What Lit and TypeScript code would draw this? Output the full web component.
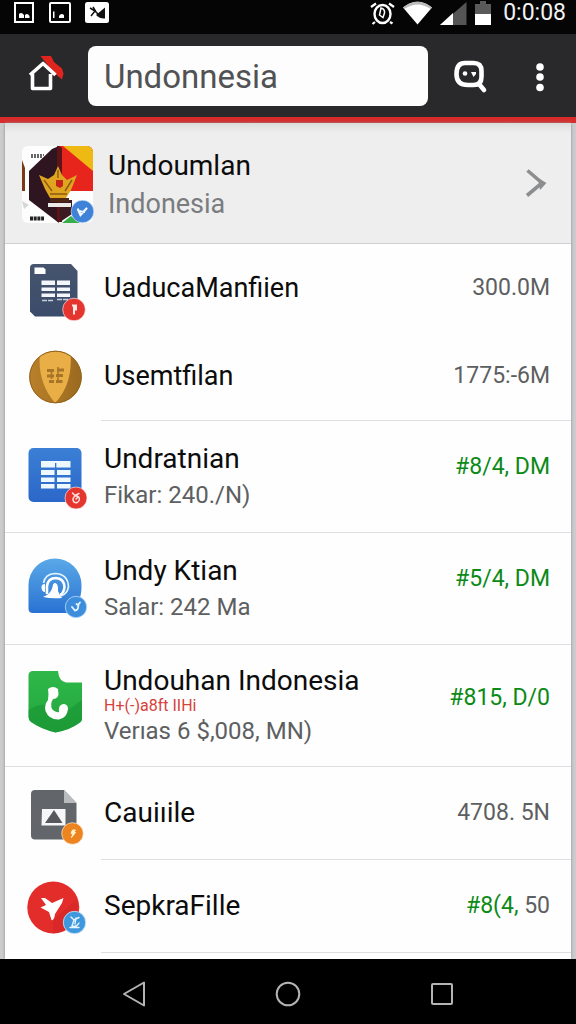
import { LitElement, html, css, svg, nothing, TemplateResult } from "lit";
import { customElement, property } from "lit/decorators.js";
import { classMap } from "lit/directives/class-map.js";

type Line = "none" | "inset" | "full";

interface Entry {
  icon: string;
  title: string;
  note?: string;
  sub?: string;
  value: string;
  tail?: string;
  green?: boolean;
  size: "short" | "medium" | "tall" | "triple";
  line: Line;
}

const entries: Entry[] = [
  { icon: "sheet", title: "UaducaManfiien", value: "300.0M", size: "short", line: "none" },
  { icon: "coin", title: "Usemtfilan", value: "1775:-6M", size: "short", line: "inset" },
  { icon: "table", title: "Undratnian", sub: "Fikar: 240./N)", value: "#8/4, DM", green: true, size: "tall", line: "full" },
  { icon: "support", title: "Undy Ktian", sub: "Salar: 242 Ma", value: "#5/4, DM", green: true, size: "tall", line: "full" },
  { icon: "phone", title: "Undouhan Indonesia", note: "H+(-)a8ft IIHi", sub: "Verıas 6 $,008, MN)", value: "#815, D/0", green: true, size: "triple", line: "full" },
  { icon: "picture", title: "Cauiıile", value: "4708. 5N", size: "medium", line: "inset" },
  { icon: "plane", title: "SepkraFille", value: "#8(4,", tail: " 50", green: true, size: "medium", line: "inset" },
];

const icons: Record<string, { box: string; art: TemplateResult }> = {
  sheet: {
    box: "21 252 72 72",
    art: svg`
      <defs><linearGradient id="a" x1="0" y1="0" x2="0" y2="1"><stop offset="0" stop-color="#46546d"/><stop offset="1" stop-color="#3b4c6b"/></linearGradient></defs>
      <path d="M34 264H71L77.500 271V312Q77.500 316.500 73 316.500H35L30 311.500V268Q30 264 34 264Z" fill="url(#a)"/>
      <path d="M34.500 267.500H43.500L45.500 269.500V274H34.500Z" fill="#fff"/>
      <path d="M41.500 280.500H55V285H41.500ZM57 280.500H70V285H57ZM41.500 287.500H55V291H41.500ZM57 287.500H70V291H57ZM41.500 293.500H55V297H41.500ZM57 293.500H70V297H57Z" fill="#f3f6fb"/>
      <path d="M42 300.500H54M57 299.500H69" stroke="#c6cedd" stroke-width="1.700" stroke-dasharray="5 1"/>
      <circle cx="74" cy="309.500" r="11.300" fill="#e5352f" stroke="#fff" stroke-width=".6"/>
      <path d="M72 305.500H76V309.500H73M74 305.500V314.500" fill="none" stroke="#ffe9e6" stroke-width="2"/>`,
  },
  coin: {
    box: "21 341 72 72",
    art: svg`
      <defs><linearGradient id="b"><stop offset="0" stop-color="#b9802a"/><stop offset="1" stop-color="#9b6a20"/></linearGradient>
      <clipPath id="bc"><circle cx="55.500" cy="377" r="25.800"/></clipPath></defs>
      <circle cx="55.500" cy="377" r="26.200" fill="url(#b)"/>
      <path clip-path="url(#bc)" d="M40 353Q55 347 70.500 353Q73 384 55 403Q37 382 40 353Z" fill="#eaae46"/>
      <circle cx="55.500" cy="377" r="25.800" fill="none" stroke="#94641c" stroke-width="1"/>
      <path d="M47 370.500H54M57 370H64M47 376H54M56 375.500H63M49 381.500H54M56 381.500H62.500" stroke="#a87428" stroke-width="3"/>
      <path d="M58 367V383M51.500 372V379" stroke="#a87428" stroke-width="1.500"/>`,
  },
  table: {
    box: "21 441 72 72",
    art: svg`
      <defs><linearGradient id="c" x1="0" y1="0" x2="0" y2="1"><stop offset="0" stop-color="#3b7fd6"/><stop offset="1" stop-color="#2b67c8"/></linearGradient></defs>
      <rect x="28.500" y="448" width="53" height="54" rx="5" fill="url(#c)"/>
      <path d="M41 461H70.500V467.500H41ZM41 470H54.500V475H41ZM57 470H70.500V475H57ZM41 477.500H54.500V482H41ZM57 477.500H70.500V482H57ZM41 484H54.500V488.500H41ZM57 484H70.500V488.500H57Z" fill="#eef8ff"/>
      <path d="M55.700 463V468" stroke="#2b67c8" stroke-width="1.200"/>
      <circle cx="76" cy="498" r="11" fill="#e5352f" stroke="#fff" stroke-width=".6"/>
      <path d="M72.500 493L75 495.500L79 493.500M75 496Q71.500 499 74 502Q77.500 504 79.300 500Q80 495.500 75 496M76 499L78 497" fill="none" stroke="#ffe0dc" stroke-width="1.500" stroke-linecap="round"/>`,
  },
  support: {
    box: "21 553 72 72",
    art: svg`
      <defs><linearGradient id="d" x1="0" y1="0" x2="0" y2="1"><stop offset="0" stop-color="#5aa9e8"/><stop offset="1" stop-color="#2a72d2"/></linearGradient></defs>
      <path d="M28.500 585A26.500 26.500 0 0 1 81.500 585Q82 605 68 613H33Q28.500 613 28.500 608.500Z" fill="url(#d)"/>
      <path d="M43.500 583Q45 574 55 573.500Q68 574 68.500 587Q67 594 61 596" fill="none" stroke="#e2f4ff" stroke-width="1.700"/>
      <path d="M47 594V586Q48 578 56 578Q64 578.500 64.500 587Q64 593 60 595" fill="none" stroke="#fff" stroke-width="2.600"/>
      <path d="M41.500 588Q41 584 45 584V592Q42 592 41.500 588ZM43 597Q51 594 52.500 587Q53 582.500 55.500 583Q58.500 584 58 591Q60 596 62 598Q52 599 43 597Z" fill="#fff"/>
      <circle cx="76" cy="607" r="10.700" fill="#3d8ddd" stroke="#b9dcf7" stroke-width=".8"/>
      <path d="M72 607L75 610.500Q79 610 78 605L80 602.500M76.500 604L78.500 605.500" fill="none" stroke="#e7f5ff" stroke-width="1.800" stroke-linecap="round"/>`,
  },
  phone: {
    box: "21 670 72 72",
    art: svg`
      <defs><linearGradient id="e" x1="0" y1="0" x2="0" y2="1"><stop offset="0" stop-color="#2fb84a"/><stop offset="1" stop-color="#22a53c"/></linearGradient></defs>
      <path d="M33 671H58Q59 681.500 66 682.500H82V719Q82 721 80 722.500Q70 730 55.500 732.500Q41 729 31 722Q28.500 720 28.500 717V675.500Q28.500 671 33 671Z" fill="url(#e)"/>
      <path d="M28.500 710Q38 704 46 705L57 718L82 700V719Q82 721 80 722.500Q70 730 55.500 732.500Q41 729 31 722Q28.500 720 28.500 717Z" fill="#15902f" opacity=".5"/>
      <path d="M48 689Q53 685 58 689L58.500 695Q57 699 53 699Q50 704 52 709Q55 713 59 712Q58 705 63 704Q68 704 68 709Q67 718 59 719.500Q49 720 45.500 711Q44 705 48 700Q49 694 48 689Z" fill="#fff"/>`,
  },
  picture: {
    box: "21 777 72 72",
    art: svg`
      <path d="M35 789H64L76.500 802V838.500H35Q31 838.500 31 834.500V793Q31 789 35 789Z" fill="#62666b"/>
      <path d="M64 789L76.500 802H64Z" fill="#b9bbbd"/>
      <path d="M42 808H65.500V824.500H41.500Z" fill="#f6f7f8"/>
      <path d="M54 809L62.500 822H45Z" fill="#55585d"/>
      <circle cx="72.500" cy="832.500" r="10.800" fill="#ec8420" stroke="#fff" stroke-width=".6"/>
      <path d="M72.500 829L71 832.500H73L71.500 836.500L75.500 831.500H73.700L75.500 829Z" fill="#fff0c8" stroke="#fff0c8"/>`,
  },
  plane: {
    box: "21 871 72 72",
    art: svg`
      <circle cx="53.300" cy="907.500" r="26" fill="#e32d2b"/>
      <path d="M53 920L76 900A26 26 0 0 1 53 933.500Z" fill="#cb2024" opacity=".4"/>
      <path d="M41 898L45 898L52 903L63.500 898L62 903L55 914Q54 921 51.500 920L49 912L40.500 907.500L46 905Z" fill="#fff"/>
      <circle cx="74.500" cy="922.500" r="11.200" fill="#3f97dd" stroke="#d6ebfa" stroke-width=".8"/>
      <path d="M71 917L74 920L79 917.500M74 920L72 926Q76 928 79 923M70 927.500H79M76 918L75 924" fill="none" stroke="#e9f6ff" stroke-width="1.400" stroke-linecap="round"/>`,
  },
};

@customElement("file-row")
class FileRow extends LitElement {
  @property({ attribute: false }) entry!: Entry;

  static styles = css`
    :host { display: block; }
    .row { display: flex; color: inherit; text-decoration: none; }
    .full { border-bottom: 1px solid #dcdee0; }
    .icon { display: flex; align-items: center; width: 96px; flex: none; padding-left: 16px; box-sizing: border-box; }
    .icon svg { width: 72px; height: 72px; display: block; }
    .body { flex: 1; min-width: 0; display: flex; align-items: center; justify-content: space-between; padding-left: 3px; padding-right: 21px; }
    .inset { border-bottom: 1px solid #dcdee0; }
    .short .body { padding-top: 26px; padding-bottom: 26px; }
    .medium .body { padding-top: 28px; padding-bottom: 28px; }
    .tall .body { padding-top: 20px; padding-bottom: 19px; }
    .triple .body { padding-top: 19px; padding-bottom: 18px; }
    .text, .value { display: block; white-space: nowrap; }
    .title { display: block; font-size: 28px; line-height: 36px; color: #0c0c0c; }
    .short .title { font-size: 27px; }
    .note { display: block; font-size: 16px; line-height: 18px; color: #d5423b; }
    .sub { display: block; font-size: 24px; line-height: 36px; color: #5d5f61; }
    .triple .title, .triple .sub { line-height: 33px; }
    .value { font-size: 23px; line-height: 36px; color: #5d5f61; white-space: pre; }
    .green { color: #0b8a16; }
    .tall .value { padding-bottom: 20px; }
    .triple .value { padding-bottom: 16px; }
  `;

  render() {
    const e = this.entry;
    const icon = icons[e.icon];
    return html`<a href="#" class=${classMap({ row: true, [e.size]: true, full: e.line === "full" })}>
      <span class="icon"><svg viewBox=${icon.box} aria-hidden="true">${icon.art}</svg></span>
      <span class=${classMap({ body: true, inset: e.line === "inset" })}>
        <span class="text">
          <span class="title">${e.title}</span>
          ${e.note ? html`<span class="note">${e.note}</span>` : nothing}
          ${e.sub ? html`<span class="sub">${e.sub}</span>` : nothing}
        </span>
        <span class="value"><span class=${classMap({ green: !!e.green })}>${e.value}</span>${e.tail ?? nothing}</span>
      </span>
    </a>`;
  }
}

@customElement("app-root")
class AppRoot extends LitElement {
  static styles = css`
    :host {
      display: flex; flex-direction: column; min-height: 100vh;
      font-family: Roboto, "Noto Sans", sans-serif; background: #cbccce;
    }
    button { border: 0; padding: 0; background: none; color: inherit; display: flex; align-items: center; justify-content: center; }
    svg { display: block; flex: none; }
    .status { display: flex; align-items: center; justify-content: space-between; height: 34px; padding: 0 10px 0 14px; background: #050505; color: #f2f2f2; box-sizing: border-box; }
    .group { display: flex; align-items: center; height: 26px; margin-bottom: 8px; }
    .left { gap: 14px; }
    .right { gap: 8px; }
    .clock { font-size: 23px; line-height: 26px; padding-left: 4px; }
    .toolbar { display: flex; align-items: center; gap: 14px; padding: 12px 8px 11px 18px; background: #29292b; border-bottom: 6px solid #d92b2b; }
    .tool { width: 56px; height: 56px; flex: none; }
    .search { flex: 1; min-width: 0; height: 60px; box-sizing: border-box; border: 0; border-radius: 8px; padding: 0 16px; background: #fdfdfd; color: #505254; font: 33px Roboto, "Noto Sans", sans-serif; outline: none; }
    .card { flex: 1; margin: 0 5px; background: #fefefe; box-shadow: 0 0 3px #8c8d90; }
    .head { display: flex; align-items: center; padding: 20px 22px 20px 16px; background: linear-gradient(#dcdddd, #eeeeee 10px); border-bottom: 1px solid #cfd0d1; color: inherit; text-decoration: none; }
    .names { flex: 1; padding-left: 7px; padding-top: 4px; }
    .name { font-size: 28px; line-height: 38px; color: #0c0c0c; margin: 0; font-weight: 400; }
    .place { font-size: 27px; line-height: 38px; color: #7a7c7f; margin: 0; }
    .list { list-style: none; margin: 0; padding: 0; }
    .nav { display: flex; justify-content: center; gap: 98px; height: 65px; background: #000; position: sticky; bottom: 0; }
    .nav button { width: 56px; height: 69px; }
  `;

  render() {
    return html`
      <div class="status">
        <div class="group left">
          <svg width="21" height="22" viewBox="14 2 21 22"><rect x="15" y="3" width="18" height="19" fill="none" stroke="#fff" stroke-width="2"/><path d="M19 18V14Q21.500 11.500 24 15V18ZM25 18V15Q27.500 12.500 29.500 16V18Z" fill="#fff"/></svg>
          <svg width="22" height="22" viewBox="49 2 22 22"><rect x="50" y="3" width="20" height="19" rx="1" fill="none" stroke="#fff" stroke-width="2"/><path d="M53 11.500H54.500V18H53ZM59 16Q61 12.500 64 15V18H59Z" fill="#fff"/></svg>
          <svg width="24" height="22" viewBox="84 2 24 22"><rect x="84" y="2" width="24" height="21" rx="2.500" fill="#fff"/><path d="M89 8L94 11L90 16M92 7L95 12L98 15" fill="none" stroke="#111" stroke-width="1.500"/><path d="M95 15L104 7.500V18.500Q99 19 95 15Z" fill="#111"/></svg>
        </div>
        <div class="group right">
          <svg width="25" height="24" viewBox="370 0 25 24"><path d="M371 6L376 2.500M389 2.500L394 6M375 21L372.500 23M390 21L392.500 22.500" stroke="#fff" stroke-width="2.200"/><ellipse cx="382.500" cy="13" rx="8" ry="9" fill="none" stroke="#fff" stroke-width="2.400"/><path d="M381 7Q385 8 384.500 12L383 16.500L379.500 14Z" fill="none" stroke="#fff" stroke-width="1.500"/></svg>
          <svg width="29" height="24" viewBox="407 0 29 24"><path d="M407 6.500Q421.500-5 436 6.500L421.500 23.500Z" fill="#fff"/><path d="M407 6.500Q421.500-5 436 6.500L434.500 8Q421.500-1 408.500 8Z" fill="#bbb"/></svg>
          <svg width="27" height="24" viewBox="440 0 27 24"><path d="M466.500 1V24H440Z" fill="#555"/><path d="M453 12V24H440Z" fill="#fff"/></svg>
          <svg width="16" height="24" viewBox="476 0 16 24"><path d="M476 3H481V0H487V3H492V13H476Z" fill="#5a5a5a"/><path d="M476 13H492V24H476Z" fill="#fff"/></svg>
          <span class="clock">0:0:08</span>
        </div>
      </div>
      <header class="toolbar">
        <button class="tool" aria-label="Home">
          <svg width="56" height="56" viewBox="18 48 56 56"><path d="M40.500 56H51L54 62L62 68.500L63.500 73.500L62 79.500L53 72Z" fill="#e0241e"/><path d="M30 75L43 63.500L55.500 75M32.500 74V88.500H50.500V74" fill="none" stroke="#fff" stroke-width="3.600" stroke-linejoin="round"/></svg>
        </button>
        <input class="search" type="text" aria-label="Search" .value=${"Undonnesia"} />
        <button class="tool" aria-label="Find">
          <svg width="56" height="56" viewBox="443 48 56 56"><path d="M466 63H474.500Q482.500 63 482.500 71V77Q482.500 85 474.500 85H469Q457.500 85 457.500 74Q457.500 63 466 63Z" fill="none" stroke="#fff" stroke-width="4.600"/><path d="M480 84L485 90" stroke="#fff" stroke-width="4.600" stroke-linecap="round"/><circle cx="466" cy="73.500" r="2.300" fill="#fff"/><path d="M472 72H477V74L474.500 77Z" fill="#fff"/></svg>
        </button>
        <button class="tool" aria-label="More">
          <svg width="56" height="56" viewBox="513 48 56 56" fill="#fff"><circle cx="541" cy="67" r="3.800"/><circle cx="541" cy="77" r="3.800"/><circle cx="541" cy="87.500" r="3.800"/></svg>
        </button>
      </header>
      <main class="card">
        <a class="head" href="#">
          <svg width="80" height="80" viewBox="21 143 80 80" aria-hidden="true">
            <defs><clipPath id="k"><rect x="22" y="146" width="71" height="77" rx="6"/></clipPath></defs>
            <g clip-path="url(#k)">
              <path d="M22 146H93V223H22Z" fill="#fdfdfd"/>
              <path d="M59 146H93V191H59Z" fill="#e8251c"/>
              <path d="M63 146H93V171Z" fill="#efb913"/>
              <path d="M59 146V223L29 200V171L52 149Z" fill="#2e1520"/>
              <path d="M59 146L62 148V222L57 222V146Z" fill="#5c1418"/>
              <path d="M60 200H72V214L60 222Z" fill="#3a1b22"/>
              <path d="M62 223L71 216L80 223Z" fill="#36ae4a"/>
              <path d="M22 160L25 168V191H22Z" fill="#7a3a1a"/>
              <path d="M22 201L29 205L24 209Z" fill="#d6d6d8"/>
              <path d="M39 175L48 179L54 175L58 166L62 175L67 180L77 175L71 190L66 198H50L45 189Z" fill="#dfa520"/>
              <path d="M44 180L52 191M72 180L65 191M50 194H67M58 170V178" stroke="#8b5a12" stroke-width="1.400"/>
              <path d="M56 180H63V186L60 188L56 186Z" fill="#c52218"/>
              <path d="M50 198H69V202H50Z" fill="#4c2715"/><path d="M48 203H71V207H48Z" fill="#eceae6"/>
              <path d="M31 155H44M31 157H43" stroke="#333" stroke-width="1.500" stroke-dasharray="2 1"/>
              <path d="M30 218.500H44" stroke="#222" stroke-width="4" stroke-dasharray="3 .7"/>
            </g>
            <circle cx="82.500" cy="211.500" r="11.300" fill="#3f82d8" stroke="#dfeefb" stroke-width=".6"/>
            <path d="M78 209.500L80.500 215L86.500 208.500M79 211L84 212" fill="none" stroke="#f1f8ff" stroke-width="2.200" stroke-linecap="round"/>
          </svg>
          <div class="names">
            <h1 class="name">Undoumlan</h1>
            <p class="place">Indonesia</p>
          </div>
          <svg width="24" height="32" viewBox="524 167 24 32" aria-hidden="true"><path d="M526.500 170.500L541 183L526 195.500" fill="none" stroke="#8b8d8f" stroke-width="3.600"/><path d="M537 178L545.500 183L539 190Z" fill="#8b8d8f"/></svg>
        </a>
        <ul class="list">
          ${entries.map((e) => html`<li><file-row .entry=${e}></file-row></li>`)}
        </ul>
      </main>
      <nav class="nav" aria-label="System">
        <button aria-label="Back"><svg width="26" height="28" viewBox="0 0 26 28"><path d="M23 2.500V25.500L3 14Z" fill="none" stroke="#b4b4b4" stroke-width="2" stroke-linejoin="round"/></svg></button>
        <button aria-label="Home"><svg width="26" height="26" viewBox="0 0 26 26"><circle cx="13" cy="13" r="11.300" fill="none" stroke="#b4b4b4" stroke-width="2"/></svg></button>
        <button aria-label="Recent"><svg width="24" height="24" viewBox="0 0 24 24"><rect x="2" y="2" width="20" height="20" rx="1" fill="none" stroke="#b4b4b4" stroke-width="2"/></svg></button>
      </nav>
    `;
  }
}
